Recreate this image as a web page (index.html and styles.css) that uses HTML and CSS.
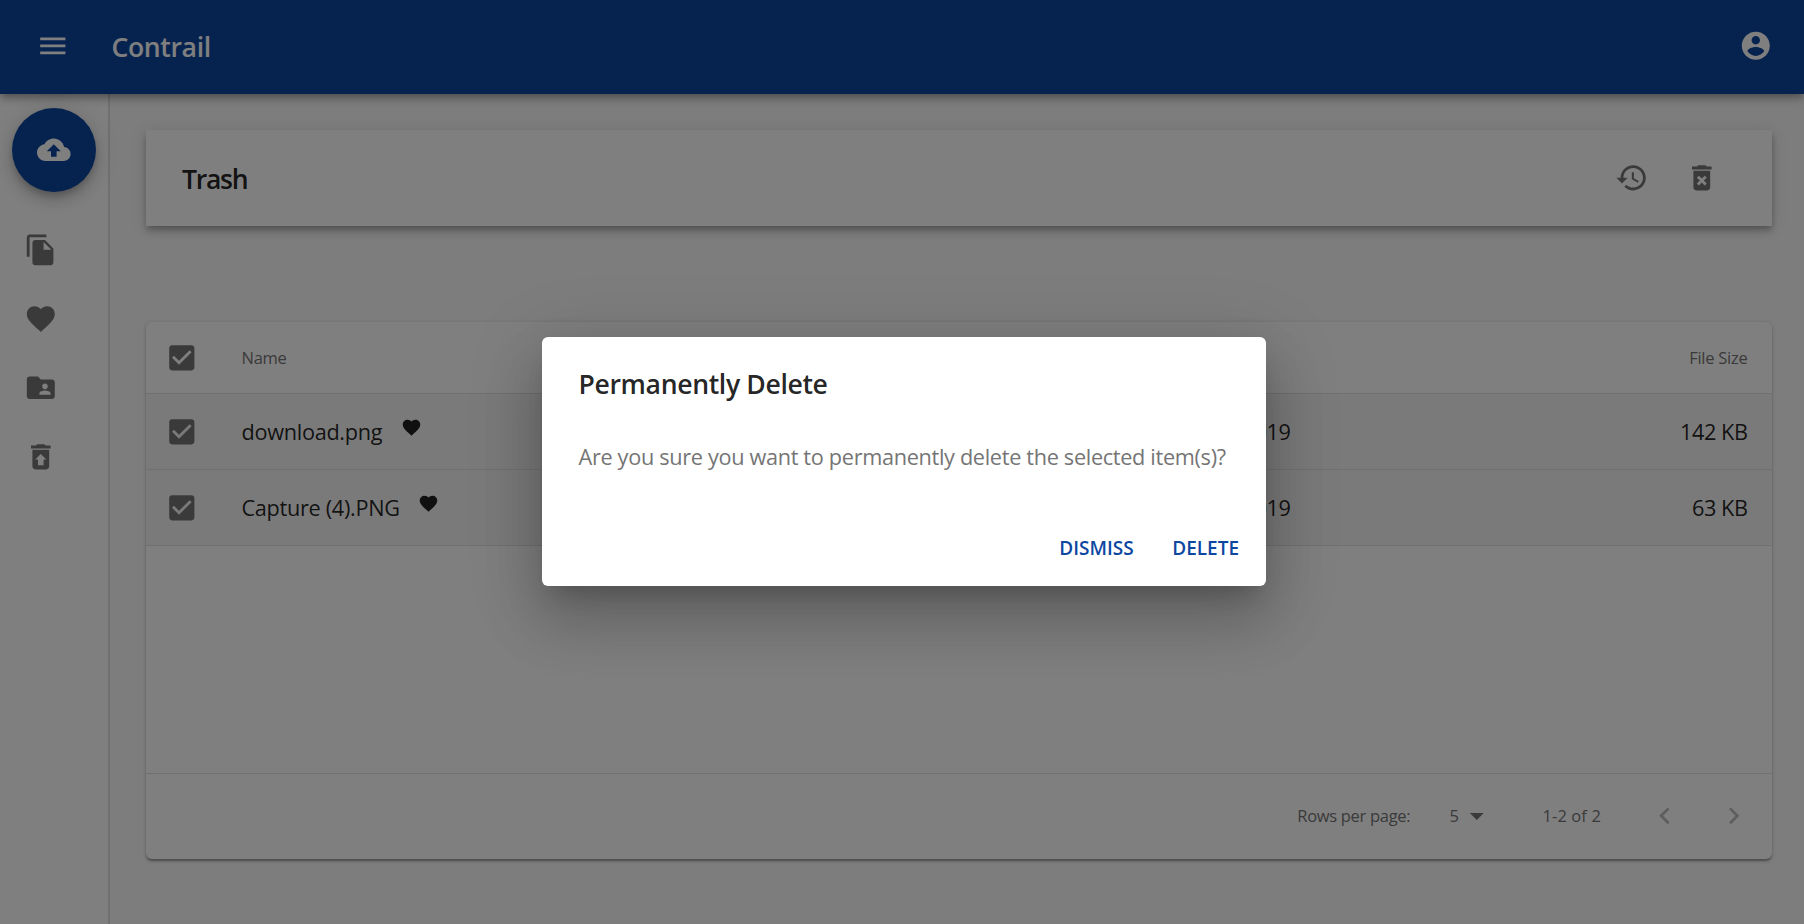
FILE: index.html
```html
<!DOCTYPE html>
<html lang="en"><head><meta charset="utf-8"><title>Contrail</title><link rel="stylesheet" href="styles.css"></head>
<body>
<div class="app">
<header class="topbar">
<svg class="icon" viewBox="0 0 24 24"><path d="M3 18h18v-2H3v2zm0-5h18v-2H3v2zm0-7v2h18V6H3z"/></svg>
<h1 class="brand">Contrail</h1>
<svg class="icon account" viewBox="0 0 24 24"><path d="M12 2C6.48 2 2 6.48 2 12s4.48 10 10 10 10-4.480 10-10S17.520 2 12 2zm0 3c1.660 0 3 1.340 3 3s-1.340 3-3 3-3-1.340-3-3 1.340-3 3-3zm0 14.200c-2.500 0-4.710-1.280-6-3.220.030-1.990 4-3.080 6-3.080 1.990 0 5.970 1.090 6 3.080-1.290 1.940-3.500 3.220-6 3.220z"/></svg>
</header>
<div class="body">
<nav class="sidebar">
<button class="fab"><svg class="icon" viewBox="0 0 24 24"><path d="M19.350 10.040C18.670 6.590 15.640 4 12 4 9.110 4 6.600 5.640 5.350 8.040 2.340 8.360 0 10.910 0 14c0 3.310 2.690 6 6 6h13c2.760 0 5-2.240 5-5 0-2.640-2.050-4.780-4.650-4.960zM14 13v4h-4v-4H7l5-5 5 5h-3z"/></svg></button>
<div class="links">
<svg class="icon" viewBox="0 0 24 24"><path d="M16 1H4c-1.100 0-2 .9-2 2v14h2V3h12V1zm-1 4l6 6v10c0 1.100-.9 2-2 2H7.990C6.890 23 6 22.100 6 21l.010-14c0-1.100.89-2 1.990-2h7zm-1 7h5.500L14 6.500V12z"/></svg>
<svg class="icon" viewBox="0 0 24 24"><path d="M12 21.350l-1.450-1.320C5.400 15.360 2 12.280 2 8.500 2 5.420 4.420 3 7.500 3c1.740 0 3.410.81 4.500 2.090C13.090 3.810 14.760 3 16.500 3 19.580 3 22 5.420 22 8.500c0 3.780-3.400 6.860-8.550 11.540L12 21.350z"/></svg>
<svg class="icon" viewBox="0 0 24 24"><path d="M20 6h-8l-2-2H4c-1.100 0-1.990.9-1.990 2L2 18c0 1.100.9 2 2 2h16c1.100 0 2-.9 2-2V8c0-1.100-.9-2-2-2zm-5 3c1.100 0 2 .9 2 2s-.9 2-2 2-2-.9-2-2 .9-2 2-2zm4 8h-8v-1c0-1.330 2.670-2 4-2s4 .67 4 2v1z"/></svg>
<svg class="icon" viewBox="0 0 24 24"><path d="M19 4h-3.500l-1-1h-5l-1 1H5v2h14zM6 7v12c0 1.100.9 2 2 2h8c1.100 0 2-.9 2-2V7H6zm8 7v4h-4v-4H8l4-4 4 4h-2z"/></svg>
</div>
</nav>
<main class="main">
<section class="titlebar">
<h2 class="heading">Trash</h2>
<svg class="icon" viewBox="0 0 24 24"><path d="M13 3c-4.970 0-9 4.030-9 9H1l3.890 3.890.070.140L9 12H6c0-3.870 3.130-7 7-7s7 3.130 7 7-3.130 7-7 7c-1.930 0-3.680-.79-4.940-2.060l-1.420 1.420C8.270 19.990 10.510 21 13 21c4.970 0 9-4.030 9-9s-4.030-9-9-9zm-1 5v5l4.280 2.540.72-1.210-3.500-2.080V8H12z"/></svg>
<svg class="icon" viewBox="0 0 24 24"><path d="M6 19c0 1.100.9 2 2 2h8c1.100 0 2-.9 2-2V7H6v12zm2.460-7.120l1.410-1.410L12 12.590l2.120-2.120 1.410 1.410L13.410 14l2.120 2.120-1.410 1.410L12 15.410l-2.120 2.120-1.410-1.410L10.590 14l-2.130-2.120zM15.500 4l-1-1h-5l-1 1H5v2h14V4z"/></svg>
</section>
<section class="table">
<div class="row head">
<svg class="icon" viewBox="0 0 24 24"><path d="M19 3H5c-1.110 0-2 .9-2 2v14c0 1.100.89 2 2 2h14c1.110 0 2-.9 2-2V5c0-1.100-.89-2-2-2zm-9 14l-5-5 1.410-1.410L10 14.170l7.590-7.590L19 8l-9 9z"/></svg>
<div class="name">Name</div><div class="size">File Size</div>
</div>
<div class="row item">
<svg class="icon" viewBox="0 0 24 24"><path d="M19 3H5c-1.110 0-2 .9-2 2v14c0 1.100.89 2 2 2h14c1.110 0 2-.9 2-2V5c0-1.100-.89-2-2-2zm-9 14l-5-5 1.410-1.410L10 14.170l7.590-7.590L19 8l-9 9z"/></svg>
<div class="name"><span class="file">download.png</span><svg class="fav" viewBox="0 0 24 24"><path d="M12 21.350l-1.450-1.320C5.400 15.360 2 12.280 2 8.500 2 5.420 4.420 3 7.500 3c1.740 0 3.410.81 4.500 2.090C13.090 3.810 14.760 3 16.500 3 19.580 3 22 5.420 22 8.500c0 3.780-3.400 6.860-8.550 11.540L12 21.350z"/></svg></div>
<div class="date">2019</div><div class="size">142 KB</div>
</div>
<div class="row item">
<svg class="icon" viewBox="0 0 24 24"><path d="M19 3H5c-1.110 0-2 .9-2 2v14c0 1.100.89 2 2 2h14c1.110 0 2-.9 2-2V5c0-1.100-.89-2-2-2zm-9 14l-5-5 1.410-1.410L10 14.170l7.590-7.590L19 8l-9 9z"/></svg>
<div class="name"><span class="file">Capture (4).PNG</span><svg class="fav" viewBox="0 0 24 24"><path d="M12 21.350l-1.450-1.320C5.400 15.360 2 12.280 2 8.500 2 5.420 4.420 3 7.500 3c1.740 0 3.410.81 4.500 2.090C13.090 3.810 14.760 3 16.500 3 19.580 3 22 5.420 22 8.500c0 3.780-3.400 6.860-8.550 11.540L12 21.350z"/></svg></div>
<div class="date">2019</div><div class="size">63 KB</div>
</div>
<div class="filler"></div>
<div class="pager">
<span class="label">Rows per page:</span><span class="per">5</span>
<svg class="icon drop" viewBox="0 0 24 24"><path d="M7 10l5 5 5-5z"/></svg>
<span class="range">1-2 of 2</span>
<svg class="icon nav" viewBox="0 0 24 24"><path d="M15.410 7.410L14 6l-6 6 6 6 1.410-1.410L10.830 12z"/></svg>
<svg class="icon nav" viewBox="0 0 24 24"><path d="M10 6L8.590 7.410 13.170 12l-4.580 4.590L10 18l6-6z"/></svg>
</div>
</section>
</main>
</div>
</div>
<div class="backdrop">
<div class="dialog" role="dialog">
<h2 class="dialog-title">Permanently Delete</h2>
<p class="dialog-text">Are you sure you want to permanently delete the selected item(s)?</p>
<div class="actions"><button>DISMISS</button><button>DELETE</button></div>
</div>
</div>
</body></html>
```
FILE: styles.css
```css
*{box-sizing:border-box}
body{margin:0;font-family:"Open Sans","Noto Sans",sans-serif;font-weight:400;color:rgba(0,0,0,.87);overflow:hidden;white-space:nowrap}
h1,h2,p{margin:0}
button{font:inherit;color:inherit;letter-spacing:inherit;border:0;background:none;padding:0}
.app{height:924px;display:flex;flex-direction:column;background:#fafafa}
.icon{width:33.6px;height:33.6px;fill:currentColor;flex:none;display:block}
.topbar{height:94px;padding:0 31.4px 2px 35.8px;display:flex;align-items:center;background:#0d47a1;color:#fff;flex:none;position:relative;box-shadow:0 3px 6px -1.5px rgba(0,0,0,.2),0 6px 7.5px rgba(0,0,0,.14),0 1.5px 15px rgba(0,0,0,.12)}
.brand,.heading,.dialog-title{font-size:26.6px;font-weight:600;line-height:36px;letter-spacing:-.36px}
.brand{margin:1px 0 0 42px;flex:1}
.body{flex:1;display:flex;min-height:0}
.sidebar{width:110px;flex:none;background:#fff;border-right:2px solid #e0e0e0;padding:14px 0 0 12px}
.fab{width:84px;height:84px;border-radius:50%;background:#0d47a1;color:#fff;display:flex;align-items:center;justify-content:center;box-shadow:0 4.5px 7.5px -1.5px rgba(0,0,0,.2),0 9px 15px rgba(0,0,0,.14),0 1.5px 27px rgba(0,0,0,.12)}
.links{padding:41px 0 0 12px;display:flex;flex-direction:column;gap:35.4px;color:#757575}
.main{flex:1;padding:36px 32px 0 36px}
.titlebar{height:96px;background:#fff;display:flex;align-items:center;padding:0 53.5px 0 36px;gap:36.8px;color:#757575;box-shadow:0 3px 6px -1.5px rgba(0,0,0,.2),0 6px 7.5px rgba(0,0,0,.14),0 1.5px 15px rgba(0,0,0,.12)}
.heading{flex:1;color:rgba(0,0,0,.87);padding-top:1px;letter-spacing:-1.3px}
.table{margin-top:96px;height:536.5px;background:#fff;border-radius:6px;box-shadow:0 1.5px 4.5px rgba(0,0,0,.2),0 1.5px 1.5px rgba(0,0,0,.14),0 3px 1.5px -1.5px rgba(0,0,0,.12)}
.row{display:grid;grid-template-columns:33.6px 1fr 200px 457px;align-items:center;padding:0 24.5px 0 18.5px;height:76px;border-bottom:1px solid #e0e0e0}
.row>.icon{color:#757575}
.head{height:72px;font-size:16.5px;letter-spacing:-.25px;color:#757575}
.name{padding-left:43.4px;display:flex;align-items:center}
.size{grid-column:4;text-align:right}
.date{grid-column:3;text-align:right}
.item{font-size:21.7px;letter-spacing:-.45px;background:#f5f5f5}
.item>div{padding-bottom:1px}
.file{letter-spacing:-.3px}
.fav{width:21px;height:21px;margin:0 0 7px 18.5px;fill:currentColor}
.filler{height:228px;border-bottom:1px solid #e0e0e0}
.pager{display:flex;align-items:center;height:83px;padding-right:21px;justify-content:flex-end;font-size:16.5px;color:#757575}
.label{letter-spacing:-.3px}
.per{margin:0 1.5px 0 39.2px}
.range{letter-spacing:.1px;margin:0 47.5px 0 48.4px}
.nav{color:#bdbdbd}
.nav+.nav{margin-left:35.4px}
.backdrop{position:absolute;inset:0;background:rgba(0,0,0,.5);display:flex;justify-content:center;align-items:center}
.dialog{width:724px;height:249px;background:#fff;border-radius:6px;padding:29px 27px 0 36.5px;margin:0 0 1px 4px;box-shadow:0 16.5px 22.5px -10.5px rgba(0,0,0,.2),0 36px 57px 4.5px rgba(0,0,0,.14),0 13.5px 69px 12px rgba(0,0,0,.12)}
.dialog-text{font-size:21.7px;letter-spacing:-.32px;color:#757575;margin-top:38px;line-height:34px}
.actions{display:flex;justify-content:flex-end;gap:38.5px;margin-top:61px;font-size:19px;font-weight:600;color:#0d47a1;line-height:26px}
```
